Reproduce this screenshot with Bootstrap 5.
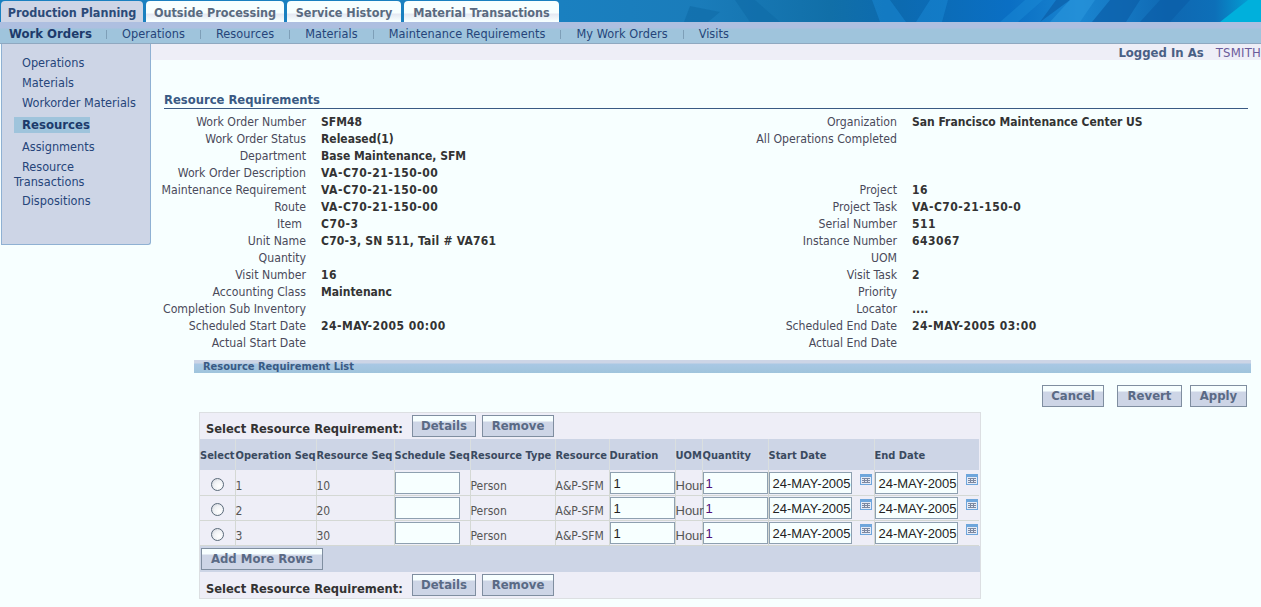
<!DOCTYPE html>
<html lang="en"><head><meta charset="utf-8"><title>Resource Requirements</title>
<link href="https://cdn.jsdelivr.net/npm/bootstrap@5.3.0/dist/css/bootstrap.min.css" rel="stylesheet">
<style>
html,body{height:607px;overflow:hidden}
body{background:#f7ffff;color:#333;font:12px/17px "DejaVu Sans Condensed","Noto Sans",sans-serif;width:1261px}
.banner{height:22px;background:linear-gradient(90deg,#1a80c0 0,#1a80c0 560px,#1a7cba 700px,#116fa8 830px,#0c6ab0 900px,#0a6fc4 1010px,#1a85d0 1080px,#0f68b2 1170px,#0d6fb8 1215px,#00aedc 1261px);position:relative;overflow:hidden;padding:1px 0 0 1px;gap:3px}
.banner svg{position:absolute;left:0;top:0}
.tabx{position:relative;height:21px;background:linear-gradient(#f7ffff 0,#f7ffff 12px,#e4e8f2 13px,#f7ffff 20px);color:#5a6a80;font-weight:700;font-size:12.5px;line-height:23px;border-radius:4px 4px 0 0;text-align:center}
.tabx.on{background:#cdd5e6;color:#2b4a78}
.subnav{height:22px;background:linear-gradient(#aebfe0 0,#aebfe0 6px,#9fc4dc 7px);border-bottom:1px solid #8fa8c0;color:#26457a;line-height:23px;padding-left:9px;font-size:12.6px}
.subnav b{font-size:13px;color:#1c3a6b;width:113px}
.sni{position:relative;margin-right:31px;letter-spacing:.06px}
.sni::before{content:"";position:absolute;left:-16px;top:8px;height:9px;border-left:1px solid #7e9fb8}
.sidex{width:150px;height:201px;margin-left:1px;background:#cdd5e6;border:1px solid #8fb1d3;border-top:0;border-radius:0 0 3px 0;padding:10px 0 0 12px;flex:none;color:#26457a;font-size:12.6px}
.sidex div{margin-bottom:3px;padding-left:8px;white-space:nowrap}
.sidex .act{background:#9fc4dc;font-weight:700;color:#1c3a6b;font-size:13px;width:76px;height:16px;line-height:16px;margin:6px 0 5px}
.sidex .wrapx{padding-left:0;text-indent:8px;line-height:15px;margin:4px 0 3px;width:100px;white-space:normal}
.mainx{flex:1;min-width:0}
.logbar{height:16px;background:#eeeef7;text-align:right;line-height:18px;color:#6a5a9a;white-space:nowrap;overflow:hidden;font-size:13px;letter-spacing:.2px}
.logbar b{color:#4a5f85;margin-right:12px;letter-spacing:0}
.ttl{margin:31px 13px 0 13px;border-bottom:1px solid #3a5a84;font-weight:700;font-size:12.9px;color:#3a5a84;height:18px;line-height:18px}
.fgrid{display:grid;grid-template-columns:143px 15px 433px 143px 15px 1fr;margin:5px 0 0 12px;line-height:17px}
.fgrid>.lb{text-align:right;color:#4a4a5a;white-space:nowrap;justify-self:end;font-size:12.2px}
.fgrid>.lb.ind{padding-right:4px}
.fgrid>.vl{font-weight:700;color:#333;white-space:nowrap}
.fgrid>.vl.wd{letter-spacing:.5px}
.fgrid>.vl.wdm{letter-spacing:.22px}
.barx{height:13px;margin:8px 10px 0 43px;background:linear-gradient(#cdd5e6 0,#cdd5e6 3px,#a9c8e4 4px,#9fc4dc 100%);font-weight:700;font-size:11px;color:#3a5a84;line-height:14px;padding-left:9px}
.actions{gap:13px;padding:12px 14px 0 0;height:38px}
.bx{display:inline-block;background:linear-gradient(#f7ffff 0,#f7ffff 5px,#cdd5e6 6px);border:1px solid #7f8ea0;color:#5a6a85;font-weight:700;font-size:13px;line-height:19px;height:22px;text-align:center}
.tblwrap{margin:1px 0 0 48px;width:782px;border:1px solid #dcdfe2;background:#eeeef7}
.tbarx{height:26px;padding:2px 0 0 6px;gap:6px;align-items:flex-start}
.tbarx strong{font-size:12.8px;color:#333;line-height:28px;margin-right:3px;width:197px;white-space:nowrap}
.tbarx.low strong{margin-top:1px}
table.rq{border-collapse:collapse;table-layout:fixed;width:779px;margin:0}
table.rq th{background:#cdd5e6;color:#3a4a60;height:31px;padding:1px 0 0;font-weight:700;font-size:11px;border-left:1px solid #dadfdf;white-space:nowrap}
table.rq th:first-child,table.rq td:first-child{border-left:0}
table.rq td{height:25px;padding:0;border-left:1px solid #d4d8d4;border-bottom:1px solid #d4d8d4;color:#555;vertical-align:bottom;white-space:nowrap;line-height:17px}
table.rq td.un{font:13px/19px "Liberation Sans",sans-serif}
.ipx{display:block;height:22px;border:1px solid #8ea0b0;background:#f7ffff;font:13px/21px "Liberation Sans",sans-serif;padding:0 0 0 3px;color:#222;width:65px;margin-bottom:1px}
.ipx.qt{color:#50107a;padding-left:2px}
.ipx.dt{width:83px}
.radx{display:block;margin:0 0 4px 11px;width:13px;height:13px;border-radius:50%;border:1px solid #5a6a7a;background:radial-gradient(circle at 65% 65%,#fff 0,#f0f2f5 50%,#c8ccd4 100%)}
.dcell{gap:8px;align-items:flex-end}
.cal{flex:none;margin-bottom:10px}
.addrow{height:26px;background:#cdd5e6;padding:2px 0 0 1px}
</style></head><body>
<div class="banner d-flex">
<svg width="1261" height="22" viewBox="0 0 1261 22" aria-hidden="true"><path d="M735 0h20l25 22h-30zM690 6l30 6-12 10h-24z" fill="#0f6aa6" opacity=".6"/><path d="M880 22l-8-22h18l16 22zM930 0h18l-6 22h-26zM1000 22l25-22h18l-25 22z" fill="#1a8ad6" opacity=".5"/><path d="M1040 22l30-22h-14zM1110 0h30l-14 22h-34zM1160 0h30l-20 22h-30z" fill="#0b5ea8" opacity=".7"/><path d="M1070 0h25l-15 22h-30z" fill="#2a96dc" opacity=".6"/><path d="M1220 22l28-22h13v22z" fill="#00b0dc"/></svg>
<div class="tabx on" style="width:142px">Production Planning</div>
<div class="tabx" style="width:138px">Outside Processing</div>
<div class="tabx" style="width:114px">Service History</div>
<div class="tabx" style="width:155px">Material Transactions</div>
</div>
<div class="subnav d-flex"><b>Work Orders</b><span class="sni">Operations</span><span class="sni">Resources</span><span class="sni">Materials</span><span class="sni">Maintenance Requirements</span><span class="sni">My Work Orders</span><span class="sni">Visits</span></div>
<div class="d-flex">
<div class="sidex"><div>Operations</div><div>Materials</div><div>Workorder Materials</div><div class="act">Resources</div><div>Assignments</div><div class="wrapx">Resource Transactions</div><div>Dispositions</div></div>
<div class="mainx">
<div class="logbar"><b>Logged In As</b>TSMITH</div>
<div class="ttl">Resource Requirements</div>
<div class="fgrid">
<div class="lb">Work Order Number</div><i></i><div class="vl">SFM48</div><div class="lb">Organization</div><i></i><div class="vl">San Francisco Maintenance Center US</div>
<div class="lb">Work Order Status</div><i></i><div class="vl">Released(1)</div><div class="lb">All Operations Completed</div><i></i><div class="vl"></div>
<div class="lb">Department</div><i></i><div class="vl">Base Maintenance, SFM</div><div class="lb"></div><i></i><div class="vl"></div>
<div class="lb">Work Order Description</div><i></i><div class="vl wd">VA-C70-21-150-00</div><div class="lb"></div><i></i><div class="vl"></div>
<div class="lb">Maintenance Requirement</div><i></i><div class="vl wd">VA-C70-21-150-00</div><div class="lb">Project</div><i></i><div class="vl wd">16</div>
<div class="lb">Route</div><i></i><div class="vl wd">VA-C70-21-150-00</div><div class="lb">Project Task</div><i></i><div class="vl wd">VA-C70-21-150-0</div>
<div class="lb ind">Item</div><i></i><div class="vl wd">C70-3</div><div class="lb">Serial Number</div><i></i><div class="vl wd">511</div>
<div class="lb">Unit Name</div><i></i><div class="vl wdm">C70-3, SN 511, Tail # VA761</div><div class="lb">Instance Number</div><i></i><div class="vl wd">643067</div>
<div class="lb">Quantity</div><i></i><div class="vl"></div><div class="lb">UOM</div><i></i><div class="vl"></div>
<div class="lb">Visit Number</div><i></i><div class="vl wd">16</div><div class="lb">Visit Task</div><i></i><div class="vl">2</div>
<div class="lb">Accounting Class</div><i></i><div class="vl">Maintenanc</div><div class="lb">Priority</div><i></i><div class="vl"></div>
<div class="lb">Completion Sub Inventory</div><i></i><div class="vl"></div><div class="lb">Locator</div><i></i><div class="vl">....</div>
<div class="lb">Scheduled Start Date</div><i></i><div class="vl wd">24-MAY-2005 00:00</div><div class="lb">Scheduled End Date</div><i></i><div class="vl wd">24-MAY-2005 03:00</div>
<div class="lb">Actual Start Date</div><i></i><div class="vl"></div><div class="lb">Actual End Date</div><i></i><div class="vl"></div>
</div>
<div class="barx">Resource Requirement List</div>
<div class="actions d-flex justify-content-end"><span class="bx" style="width:62px">Cancel</span><span class="bx" style="width:65px;margin-right:-5px">Revert</span><span class="bx" style="width:57px">Apply</span></div>
<div class="tblwrap">
<div class="tbarx d-flex"><strong>Select Resource Requirement:</strong><span class="bx" style="width:64px">Details</span><span class="bx" style="width:72px">Remove</span></div>
<table class="rq"><colgroup><col style="width:35px"><col style="width:81px"><col style="width:78px"><col style="width:76px"><col style="width:85px"><col style="width:54px"><col style="width:66px"><col style="width:27px"><col style="width:66px"><col style="width:106px"><col style="width:105px"></colgroup>
<thead><tr><th>Select</th><th>Operation Seq</th><th>Resource Seq</th><th>Schedule Seq</th><th>Resource Type</th><th>Resource</th><th>Duration</th><th>UOM</th><th>Quantity</th><th>Start Date</th><th>End Date</th></tr></thead>
<tbody id="tb"></tbody></table>
<div class="addrow"><span class="bx" style="width:122px">Add More Rows</span></div>
<div class="tbarx low d-flex"><strong>Select Resource Requirement:</strong><span class="bx" style="width:64px">Details</span><span class="bx" style="width:72px">Remove</span></div>
</div>
</div></div>
<script>
const cal='<svg class="cal" width="12" height="11" viewBox="0 0 12 11"><rect width="12" height="11" fill="#6ea6dc"/><rect x="1" y="3" width="10" height="7" fill="#e4eaf6"/><path d="M2 4.5h8M2 6.5h8M2 8.5h8M4.5 4v5M7.5 4v5" stroke="#7c88a0"/></svg>';
document.getElementById('tb').innerHTML=[[1,10],[2,20],[3,30]].map(r=>`<tr><td><span class="radx"></span></td><td>${r[0]}</td><td>${r[1]}</td><td><span class="ipx"></span></td><td>Person</td><td>A&amp;P-SFM</td><td><span class="ipx">1</span></td><td class="un">Hour</td><td><span class="ipx qt">1</span></td><td><div class="d-flex dcell"><span class="ipx dt">24-MAY-2005</span>${cal}</div></td><td><div class="d-flex dcell"><span class="ipx dt">24-MAY-2005</span>${cal}</div></td></tr>`).join('');
</script>
</body></html>
